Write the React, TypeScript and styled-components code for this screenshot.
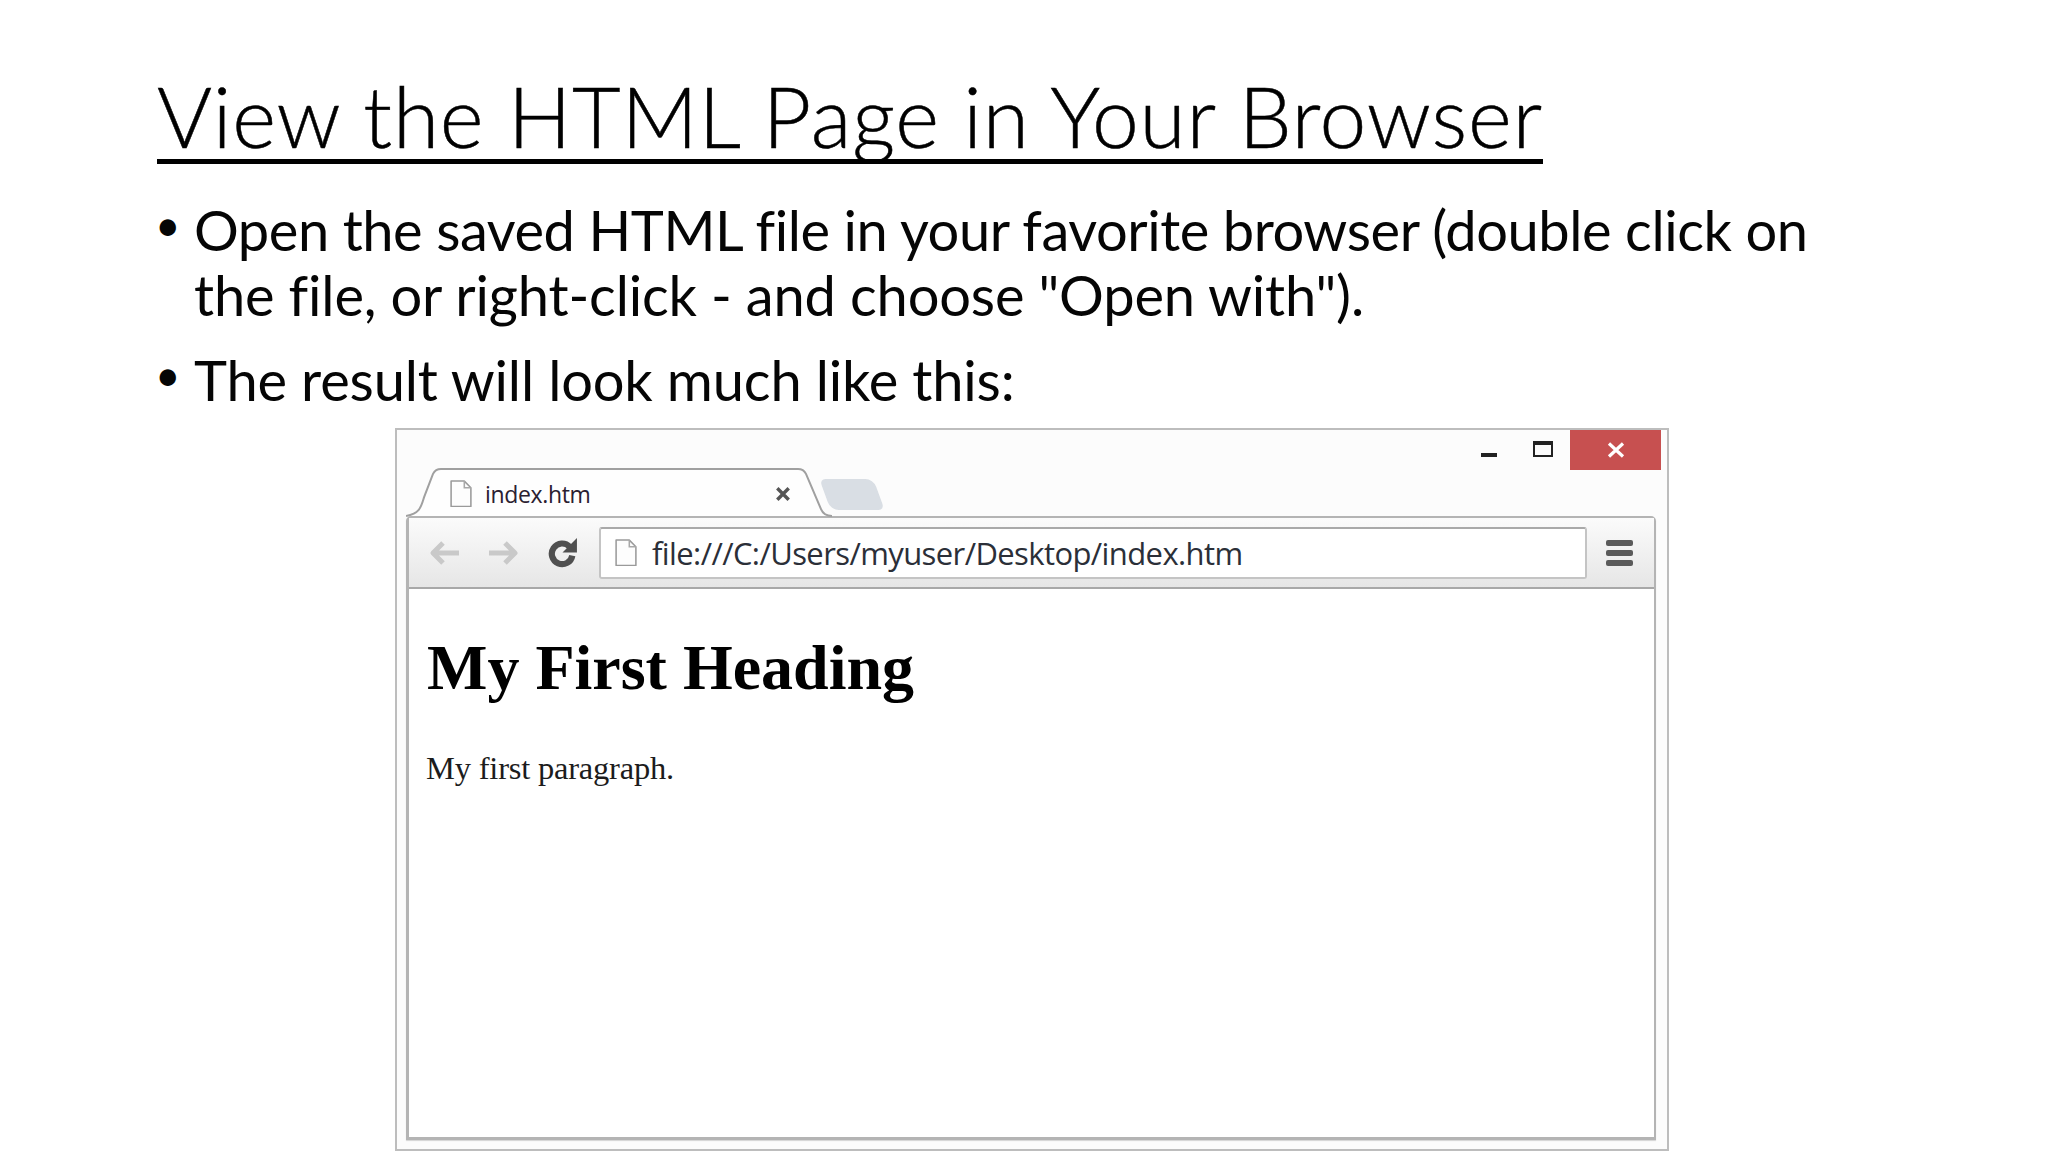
import React from "react";
import styled, { createGlobalStyle } from "styled-components";

const GlobalStyle = createGlobalStyle`
  html, body {
    margin: 0;
    padding: 0;
    background: #ffffff;
  }
`;

const PageIcon = ({ size }: { size: number }) => (
  <svg width={size} height={size * 1.25} viewBox="0 0 20 25" fill="none">
    <path
      d="M1 1h12l6 6v17H1z"
      fill="#fdfdfd"
      stroke="#9a9a9a"
      strokeWidth="1.4"
      strokeLinejoin="round"
    />
    <path d="M13 1v6h6" stroke="#a8a8a8" strokeWidth="1.4" fill="none" />
  </svg>
);

const Arrow = ({ flip }: { flip?: boolean }) => (
  <svg
    width="31"
    height="28"
    viewBox="0 0 31 28"
    fill="none"
    style={flip ? { transform: "scaleX(-1)" } : undefined}
  >
    <path
      d="M14 4 4 14l10 10M4 14h26"
      stroke="#c9c9c9"
      strokeWidth="5"
      strokeLinejoin="round"
    />
  </svg>
);

const Reload = () => (
  <svg width="31" height="31" viewBox="0 0 30 30" fill="none">
    <path
      d="M22 9.5A10 10 0 1 0 24.5 18"
      stroke="#505050"
      strokeWidth="6"
      fill="none"
    />
    <path d="M29 1v14H15z" fill="#505050" />
  </svg>
);

export default function App() {
  return (
    <Slide>
      <GlobalStyle />
      <Title>View the HTML Page in Your Browser</Title>
      <Bullets>
        <Bullet>
          Open the saved HTML file in your favorite browser (double click on{" "}
          <LooseLine>the file, or right-click - and choose "Open with").</LooseLine>
        </Bullet>
        <Bullet>
          <LooseLine>The result will look much like this:</LooseLine>
        </Bullet>
      </Bullets>
      <BrowserWindow>
        <TitleBar>
          <WindowButton>
            <MinimizeGlyph />
          </WindowButton>
          <WindowButton>
            <MaximizeGlyph />
          </WindowButton>
          <CloseButton>
            <svg width="18" height="16" viewBox="0 0 18 16">
              <path
                d="M2 1.5 16 14.5M16 1.5 2 14.5"
                stroke="#fff"
                strokeWidth="3.2"
              />
            </svg>
          </CloseButton>
        </TitleBar>
        <TabStrip>
          <Tab>
            <TabShape viewBox="0 0 426 50" preserveAspectRatio="none">
              <path
                d="M0 49C14 46 15 40 18 30L27 6C29 2 31 1 35 1H392C396 1 398 2 400 6L415 42C417 47 420 49 426 49"
                fill="#fefefe"
                stroke="#a0a0a0"
                strokeWidth="2"
              />
            </TabShape>
            <PageIcon size={22} />
            <TabLabel>index.htm</TabLabel>
            <TabClose>
              <svg width="16" height="16" viewBox="0 0 14 14">
                <path
                  d="M2 2 12 12M12 2 2 12"
                  stroke="#555"
                  strokeWidth="3"
                />
              </svg>
            </TabClose>
          </Tab>
          <NewTab />
        </TabStrip>
        <Chrome>
          <Toolbar>
            <NavButtons>
              <Arrow />
              <Arrow flip />
              <Reload />
            </NavButtons>
            <AddressBar>
              <PageIcon size={22} />
              <AddressText>file:///C:/Users/myuser/Desktop/index.htm</AddressText>
            </AddressBar>
            <Menu>
              <MenuLine />
              <MenuLine />
              <MenuLine />
            </Menu>
          </Toolbar>
          <Viewport>
            <Heading>My First Heading</Heading>
            <Paragraph>My first paragraph.</Paragraph>
          </Viewport>
        </Chrome>
      </BrowserWindow>
    </Slide>
  );
}

const Slide = styled.div`
  width: 2048px;
  height: 1152px;
  overflow: hidden;
  box-sizing: border-box;
  padding: 66px 0 0 157px;
  background: #ffffff;
  color: #050505;
  font-family: "Lato", "Liberation Sans", sans-serif;
`;

const Title = styled.h1`
  display: inline-block;
  margin: 0;
  font-size: 84px;
  line-height: 100px;
  font-weight: 300;
  letter-spacing: 0.75px;
  color: #000000;
  white-space: nowrap;
  border-bottom: 5px solid #000000;
  height: 93px;
  -webkit-text-stroke: 0.5px #000000;
`;

const Bullets = styled.ul`
  list-style: none;
  margin: 33px 0 0;
  padding: 0;
  width: 1700px;
`;

const Bullet = styled.li`
  position: relative;
  padding-left: 37px;
  margin-bottom: 20px;
  font-size: 56px;
  line-height: 65px;
  letter-spacing: -0.43px;

  &::before {
    content: "•";
    position: absolute;
    left: -2px;
    top: -5px;
    font-size: 44px;
  }
`;

const LooseLine = styled.span`
  letter-spacing: -0.16px;
`;

const BrowserWindow = styled.div`
  width: 1274px;
  height: 723px;
  margin: -4px 0 0 238px;
  box-sizing: border-box;
  display: flex;
  flex-direction: column;
  background: #fcfcfc;
  border: 2px solid #bdbdbd;
`;

const TitleBar = styled.div`
  height: 40px;
  flex: none;
  display: flex;
  justify-content: flex-end;
  padding-right: 6px;
`;

const WindowButton = styled.div`
  width: 54px;
  height: 40px;
  display: flex;
  align-items: center;
  justify-content: center;
`;

const MinimizeGlyph = styled.div`
  width: 16px;
  height: 4px;
  margin-top: 9px;
  background: #222222;
`;

const MaximizeGlyph = styled.div`
  width: 20px;
  height: 16px;
  box-sizing: border-box;
  margin-top: -2px;
  border: 2px solid #222222;
  border-top-width: 4px;
`;

const CloseButton = styled.div`
  width: 91px;
  height: 40px;
  display: flex;
  align-items: center;
  justify-content: center;
  background: #c75050;
`;

const TabStrip = styled.div`
  height: 46px;
  flex: none;
  display: flex;
  align-items: flex-end;
  padding-left: 9px;
`;

const Tab = styled.div`
  position: relative;
  z-index: 1;
  width: 426px;
  flex: none;
  height: 49px;
  margin-bottom: -1px;
  box-sizing: border-box;
  padding: 2px 0 0 44px;
  display: flex;
  align-items: center;
`;

const TabShape = styled.svg`
  position: absolute;
  inset: 0;
  width: 100%;
  height: 100%;
  z-index: -1;
`;

const TabLabel = styled.span`
  margin-left: 13px;
  font-family: "Open Sans", "Liberation Sans", sans-serif;
  font-size: 23px;
  letter-spacing: -0.35px;
  color: #2a2030;
`;

const TabClose = styled.span`
  margin-left: auto;
  margin-right: 41px;
  display: flex;
`;

const NewTab = styled.div`
  width: 54px;
  height: 31px;
  margin: 0 0 6px -7px;
  background: #d9dee4;
  border-radius: 6px 8px 6px 8px;
  transform: skewX(20deg);
`;

const Chrome = styled.div`
  flex: 1;
  margin: 0 11px 9px 9px;
  display: flex;
  flex-direction: column;
  border: 2px solid #b4b4b4;
  border-radius: 5px 5px 0 0;
  box-shadow: 0 1px 1px #d4d4d4;
  border-left-width: 3px;
  border-bottom-width: 3px;
`;

const Toolbar = styled.div`
  height: 69px;
  flex: none;
  display: flex;
  align-items: center;
  background: linear-gradient(#fbfbfb, #e6e6e6);
  border-bottom: 2px solid #a8a8a8;
  box-sizing: content-box;
`;

const NavButtons = styled.div`
  width: 190px;
  flex: none;
  display: flex;
  align-items: center;
  gap: 28px;
  padding-left: 20px;
  box-sizing: border-box;
`;

const AddressBar = styled.div`
  width: 988px;
  height: 52px;
  flex: none;
  box-sizing: border-box;
  display: flex;
  align-items: center;
  padding-left: 14px;
  background: #ffffff;
  border: 2px solid #c4c4c4;
  border-top-color: #a9a9a9;
  border-radius: 3px;
`;

const AddressText = styled.span`
  margin-left: 15px;
  font-family: "Open Sans", "Liberation Sans", sans-serif;
  font-size: 31px;
  letter-spacing: -0.6px;
  color: #2b2f38;
`;

const Menu = styled.div`
  flex: 1;
  display: flex;
  flex-direction: column;
  align-items: center;
  gap: 4px;
  padding-right: 2px;
`;

const MenuLine = styled.div`
  width: 27px;
  height: 6px;
  border-radius: 2px;
  background: #5a5a5a;
`;

const Viewport = styled.div`
  flex: 1;
  background: #ffffff;
  padding: 0 18px;
  font-family: "Liberation Serif", serif;
  color: #000000;
`;

const Heading = styled.h2`
  margin: 44px 0 0;
  font-size: 64px;
  line-height: 70px;
  font-weight: 700;
`;

const Paragraph = styled.p`
  margin: 47px 0 0 -1px;
  font-size: 32.5px;
  line-height: 36px;
  letter-spacing: -0.2px;
  color: #1c1c1c;
`;
